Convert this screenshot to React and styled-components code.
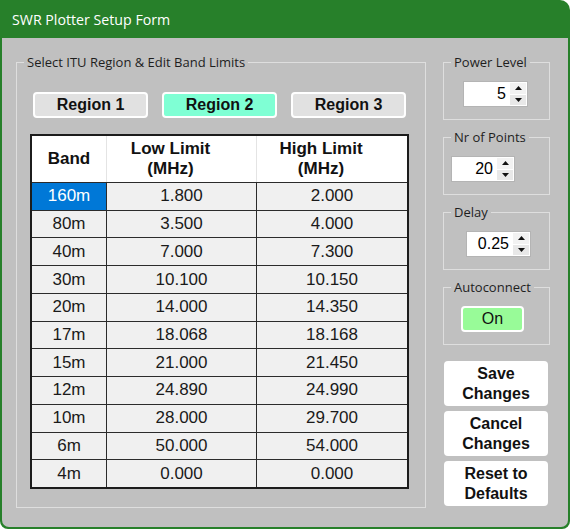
import React, { useState } from 'react';
import styled, { createGlobalStyle } from 'styled-components';

const GlobalStyle = createGlobalStyle`
  html, body {
    margin: 0;
    padding: 0;
    background: #fff;
  }
  body {
    font-family: "Liberation Sans", Arial, sans-serif;
  }
`;

// Window frame
const Window = styled.div`
  width: 570px;
  height: 529px;
  box-sizing: border-box;
  display: flex;
  flex-direction: column;
  background: #27802a;
  border-radius: 0 10px 8px 8px;
  padding: 0 2px 2px;
  overflow: hidden;
`;

const TitleBar = styled.div`
  height: 38px;
  flex-shrink: 0;
  display: flex;
  align-items: center;
  padding-left: 10px;
  color: #fff;
  font-family: "Open Sans", "Noto Sans", sans-serif;
  font-size: 14.2px;
`;

const Body = styled.div`
  flex: 1;
  display: flex;
  align-items: flex-start;
  gap: 17px;
  padding: 16px 0 0 14px;
  background: #c0c0c0;
  border-radius: 0 0 7px 7px;
`;

// Group boxes
const Group = styled.fieldset`
  margin: 0;
  padding: 0;
  min-width: 0;
  box-sizing: border-box;
  border: 1px solid #dedede;
  width: ${p => p.$w}px;
  ${p => p.$h ? `height: ${p.$h}px;` : ''}
`;

const Caption = styled.legend`
  margin-left: 7px;
  padding: 0 3px;
  font-family: "Open Sans", "Noto Sans", sans-serif;
  font-size: 13px;
  line-height: 16px;
  color: #1e1e1e;
`;

const BandBody = styled.div`
  padding: 22px 16px 18px 13px;
`;

const RegionRow = styled.div`
  display: flex;
  gap: 14px;
  padding-left: 3px;
  margin-bottom: 16px;
`;

const RegionButton = styled.button`
  width: 115px;
  height: 26px;
  box-sizing: border-box;
  padding: 0;
  border: 2px solid #fff;
  border-radius: 4px;
  background: ${p => p.$active ? '#7fffd4' : '#e1e1e1'};
  color: #111;
  font-family: "Liberation Sans", Arial, sans-serif;
  font-weight: 700;
  font-size: 16px;
  cursor: pointer;
`;

// Band limits grid
const LimitsTable = styled.div`
  width: 379px;
  height: 355px;
  box-sizing: border-box;
  border: 2px solid #1c1c1c;
  display: grid;
  grid-template-columns: 74px 150px 1fr;
  grid-template-rows: 46px repeat(11, 1fr);
`;

const HeadCell = styled.div`
  display: flex;
  align-items: center;
  justify-content: center;
  text-align: center;
  padding-right: ${p => p.$glyphSpace ? 22 : 0}px;
  background: #fff;
  font-weight: 700;
  font-size: 17px;
  line-height: 20px;
  color: #111;
  border-left: ${p => p.$first ? 'none' : '1px solid #e4e4e4'};
`;

const Cell = styled.div`
  display: flex;
  align-items: center;
  justify-content: center;
  font-size: 17px;
  background: ${p => p.$selected ? '#0078d7' : '#f0f0f0'};
  color: ${p => p.$selected ? '#fff' : '#1a1a1a'};
  border-top: 1px solid #2b2b2b;
  border-left: ${p => p.$first ? 'none' : '1px solid #2b2b2b'};
`;

// Right-hand settings column
const Side = styled.div`
  width: 107px;
  display: flex;
  flex-direction: column;
  gap: 9px;
`;

const GroupInner = styled.div`
  padding: 11px 0 0 ${p => p.$indent}px;
  display: flex;
`;

const Spin = styled.div`
  width: ${p => p.$w}px;
  height: 26px;
  box-sizing: border-box;
  display: flex;
  background: #fff;
  border: 1px solid #b4b4b4;
`;

const SpinValue = styled.div`
  flex: 1;
  display: flex;
  align-items: center;
  justify-content: flex-end;
  padding-right: 3px;
  font-size: 16px;
  color: #000;
`;

const SpinButtons = styled.div`
  width: 18px;
  display: flex;
  flex-direction: column;
  gap: 1px;
  padding: 1px;
  box-sizing: border-box;
`;

const SpinArrow = styled.div`
  flex: 1;
  display: flex;
  align-items: center;
  justify-content: center;
  background: ${p => p.$down ? '#e8e8e8' : '#f2f2f2'};
`;

const ToggleButton = styled.button`
  width: 63px;
  height: 26px;
  box-sizing: border-box;
  padding: 0;
  border: 2px solid #fff;
  border-radius: 4px;
  background: #98fb98;
  color: #111;
  font-family: "Liberation Sans", Arial, sans-serif;
  font-size: 16px;
  cursor: pointer;
`;

const Actions = styled.div`
  display: flex;
  flex-direction: column;
  gap: 5px;
  margin: 7px 0 0 1px;
`;

const ActionButton = styled.button`
  width: 104px;
  height: 45px;
  padding: 0;
  border: none;
  border-radius: 4px;
  background: #fff;
  color: #111;
  font-family: "Liberation Sans", Arial, sans-serif;
  font-weight: 700;
  font-size: 16px;
  line-height: 20px;
  cursor: pointer;
`;

const Arrow = ({ down }) => (
  <svg width="7" height="4" viewBox="0 0 7 4">
    <polygon points={down ? '0,0 7,0 3.5,4' : '0,4 7,4 3.5,0'} fill="#111" />
  </svg>
);

const SpinBox = ({ value, width }) => (
  <Spin $w={width}>
    <SpinValue>{value}</SpinValue>
    <SpinButtons>
      <SpinArrow><Arrow /></SpinArrow>
      <SpinArrow $down><Arrow down /></SpinArrow>
    </SpinButtons>
  </Spin>
);

const bands = [
  ['160m', '1.800', '2.000'],
  ['80m', '3.500', '4.000'],
  ['40m', '7.000', '7.300'],
  ['30m', '10.100', '10.150'],
  ['20m', '14.000', '14.350'],
  ['17m', '18.068', '18.168'],
  ['15m', '21.000', '21.450'],
  ['12m', '24.890', '24.990'],
  ['10m', '28.000', '29.700'],
  ['6m', '50.000', '54.000'],
  ['4m', '0.000', '0.000'],
];

export default function App() {
  const [region, setRegion] = useState(2);
  const [autoconnect, setAutoconnect] = useState(true);

  return (
    <>
      <GlobalStyle />
      <Window>
        <TitleBar>SWR Plotter Setup Form</TitleBar>
        <Body>
          <Group $w={410}>
            <Caption>Select ITU Region &amp; Edit Band Limits</Caption>
            <BandBody>
              <RegionRow>
                {[1, 2, 3].map(n => (
                  <RegionButton key={n} $active={region === n} onClick={() => setRegion(n)}>
                    Region {n}
                  </RegionButton>
                ))}
              </RegionRow>
              <LimitsTable>
                <HeadCell $first>Band</HeadCell>
                <HeadCell $glyphSpace>Low Limit<br />(MHz)</HeadCell>
                <HeadCell $glyphSpace>High Limit<br />(MHz)</HeadCell>
                {bands.map(([band, low, high], i) => (
                  <React.Fragment key={band}>
                    <Cell $first $selected={i === 0}>{band}</Cell>
                    <Cell>{low}</Cell>
                    <Cell>{high}</Cell>
                  </React.Fragment>
                ))}
              </LimitsTable>
            </BandBody>
          </Group>

          <Side>
            <Group $w={107} $h={66}>
              <Caption>Power Level</Caption>
              <GroupInner $indent={19}><SpinBox value="5" width={65} /></GroupInner>
            </Group>
            <Group $w={107} $h={66}>
              <Caption>Nr of Points</Caption>
              <GroupInner $indent={7}><SpinBox value="20" width={64} /></GroupInner>
            </Group>
            <Group $w={107} $h={66}>
              <Caption>Delay</Caption>
              <GroupInner $indent={22}><SpinBox value="0.25" width={65} /></GroupInner>
            </Group>
            <Group $w={107} $h={66}>
              <Caption>Autoconnect</Caption>
              <GroupInner $indent={17}>
                <ToggleButton onClick={() => setAutoconnect(!autoconnect)}>
                  {autoconnect ? 'On' : 'Off'}
                </ToggleButton>
              </GroupInner>
            </Group>
            <Actions>
              <ActionButton>Save<br />Changes</ActionButton>
              <ActionButton>Cancel<br />Changes</ActionButton>
              <ActionButton>Reset to<br />Defaults</ActionButton>
            </Actions>
          </Side>
        </Body>
      </Window>
    </>
  );
}
